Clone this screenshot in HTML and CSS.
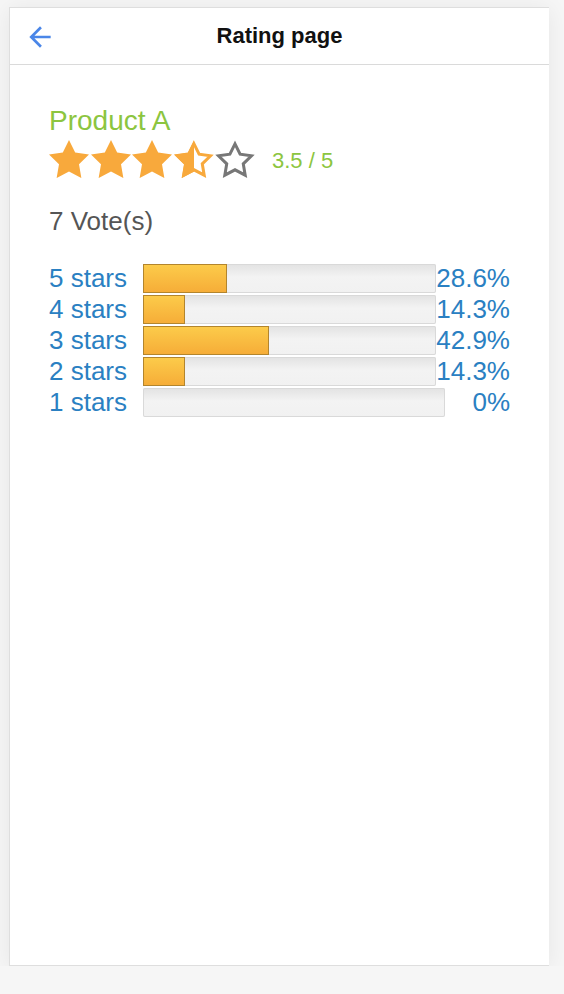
FILE: index.html
```html
<!DOCTYPE html>
<html lang="en">
<head>
<meta charset="utf-8">
<title>Rating page</title>
<link rel="stylesheet" href="styles.css">
</head>
<body>
<div class="card">
  <header class="topbar">
    <button class="back" aria-label="Back">
      <svg viewBox="0 0 24 24" width="32" height="32"><path d="M20 11H7.83l5.59-5.59L12 4l-8 8 8 8 1.41-1.41L7.83 13H20v-2z" fill="#4a86e8"/></svg>
    </button>
    <h1 class="title">Rating page</h1>
    <span class="spacer"></span>
  </header>
  <main class="content">
    <div class="product">Product A</div>
    <div class="rating">
      <div class="stars">
        <svg class="star" viewBox="2 2 20 19"><path class="full" d="M12 2l3.09 6.26L22 9.27l-5 4.87 1.18 6.88L12 17.77l-6.18 3.25L7 14.14 2 9.27l6.91-1.01L12 2z"/></svg>
        <svg class="star" viewBox="2 2 20 19"><path class="full" d="M12 2l3.09 6.26L22 9.27l-5 4.87 1.18 6.88L12 17.77l-6.18 3.25L7 14.14 2 9.27l6.91-1.01L12 2z"/></svg>
        <svg class="star" viewBox="2 2 20 19"><path class="full" d="M12 2l3.09 6.26L22 9.27l-5 4.87 1.18 6.88L12 17.77l-6.18 3.25L7 14.14 2 9.27l6.91-1.01L12 2z"/></svg>
        <svg class="star" viewBox="2 2 20 19">
          <defs><clipPath id="lefthalf"><rect x="0" y="0" width="12" height="24"/></clipPath></defs>
          <path class="full" clip-path="url(#lefthalf)" d="M12 2l3.09 6.26L22 9.27l-5 4.87 1.18 6.88L12 17.77l-6.18 3.25L7 14.14 2 9.27l6.91-1.01L12 2z"/>
          <path class="half-line" d="M12 3.9l2.55 5.17 5.7.83-4.12 4.02.97 5.68L12 16.9l-5.1 2.7.97-5.68-4.12-4.02 5.7-.83L12 3.9z"/>
        </svg>
        <svg class="star" viewBox="2 2 20 19"><path class="empty" d="M12 3.9l2.55 5.17 5.7.83-4.12 4.02.97 5.68L12 16.9l-5.1 2.7.97-5.68-4.12-4.02 5.7-.83L12 3.9z"/></svg>
      </div>
      <span class="score">3.5 / 5</span>
    </div>
    <div class="votes">7 Vote(s)</div>
    <div class="dist">
      <div class="row">
        <span class="label">5 stars</span>
        <div class="bar"><div class="fill" style="width:28.6%"></div></div>
        <span class="pct">28.6%</span>
      </div>
      <div class="row">
        <span class="label">4 stars</span>
        <div class="bar"><div class="fill" style="width:14.3%"></div></div>
        <span class="pct">14.3%</span>
      </div>
      <div class="row">
        <span class="label">3 stars</span>
        <div class="bar"><div class="fill" style="width:42.9%"></div></div>
        <span class="pct">42.9%</span>
      </div>
      <div class="row">
        <span class="label">2 stars</span>
        <div class="bar"><div class="fill" style="width:14.3%"></div></div>
        <span class="pct">14.3%</span>
      </div>
      <div class="row">
        <span class="label">1 stars</span>
        <div class="bar"></div>
        <span class="pct">0%</span>
      </div>
    </div>
  </main>
</div>
</body>
</html>
```

FILE: styles.css
```css
html, body {
  margin: 0;
  padding: 0;
}
body {
  background: #f6f6f6;
  font-family: "Liberation Sans", Arial, sans-serif;
}
.card {
  box-sizing: border-box;
  margin: 7px 0 0 9px;
  width: 540px;
  height: 959px;
  background: #fff;
  border-top: 1px solid #dedede;
  border-left: 1px solid #dedede;
  border-bottom: 1px solid #dedede;
  box-shadow: 0 2px 22px rgba(0, 0, 0, 0.07);
}
.topbar {
  display: flex;
  align-items: center;
  height: 56px;
  padding: 0 14px;
  border-bottom: 1px solid #dadada;
}
.back {
  display: flex;
  width: 32px;
  height: 32px;
  padding: 0;
  margin: 0;
  border: 0;
  background: none;
  position: relative;
  top: 1px;
}
.spacer {
  width: 32px;
}
.title {
  flex: 1;
  margin: 0;
  text-align: center;
  font-size: 22px;
  font-weight: bold;
  color: #111;
}
.content {
  padding: 40px 39px 0 39px;
}
.product {
  font-size: 28px;
  line-height: 32px;
  color: #8cc540;
}
.rating {
  display: flex;
  align-items: center;
  margin-top: 2px;
  height: 40px;
}
.stars {
  display: flex;
  gap: 1.5px;
}
.star {
  width: 40px;
  height: 38px;
  display: block;
}
.full {
  fill: #f8a93c;
}
.half-line {
  fill: none;
  stroke: #f8a93c;
  stroke-width: 1.5;
}
.empty {
  fill: none;
  stroke: #777;
  stroke-width: 1.5;
}
.score {
  margin-left: 17px;
  font-size: 22px;
  color: #8cc540;
  position: relative;
  top: 2px;
}
.votes {
  margin-top: 27px;
  font-size: 26px;
  line-height: 30px;
  color: #555;
}
.dist {
  margin-top: 27px;
}
.row {
  display: flex;
  align-items: center;
  height: 31px;
  font-size: 26px;
  line-height: 31px;
  color: #2a80c2;
}
.label {
  flex: none;
  width: 94px;
}
.bar {
  flex: 1;
  height: 29px;
  border-radius: 2px;
  box-shadow: inset 0 0 0 1px #d9d9d9;
  background: linear-gradient(#e2e2e2, #f3f3f3 45%, #f1f1f1);
}
.fill {
  box-sizing: border-box;
  height: 29px;
  border: 1px solid #b3852d;
  background: linear-gradient(#fccb4a, #f6ad38);
}
.pct {
  flex: none;
  min-width: 65px;
  text-align: right;
}
```
